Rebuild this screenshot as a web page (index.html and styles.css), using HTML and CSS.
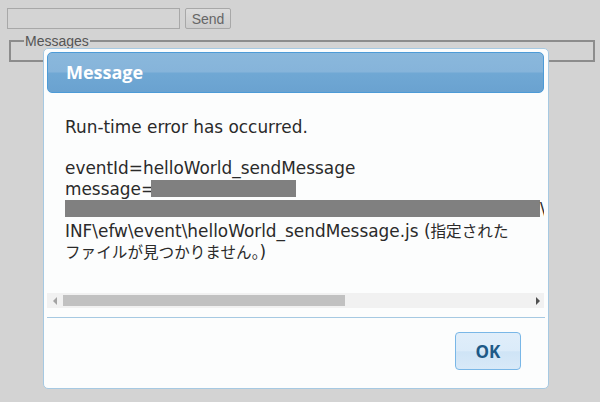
FILE: index.html
```html
<!DOCTYPE html>
<html>
<head>
<meta charset="utf-8">
<link rel="stylesheet" href="styles.css">
</head>
<body>
<div class="page">
  <div class="toolbar">
    <input class="msg-input" type="text">
    <button class="send-btn">Send</button>
  </div>
  <fieldset class="messages">
    <legend>Messages</legend>
  </fieldset>
</div>
<div class="dialog">
  <div class="dialog-header">Message</div>
  <div class="dialog-content">
    <div class="text">
      <div class="line">Run-time error has occurred.</div>
      <div class="line">&nbsp;</div>
      <div class="line">eventId=helloWorld_sendMessage</div>
      <div class="line">message=<span class="redact redact-short"></span></div>
      <div class="line"><span class="redact redact-long"></span>\WEB-</div>
      <div class="line">INF\efw\event\helloWorld_sendMessage.js (<span class="ja">指定された</span></div>
      <div class="line"><span class="ja">ファイルが見つかりません。</span>)</div>
    </div>
  </div>
  <div class="hscroll">
    <span class="arrow arrow-left"></span>
    <div class="track"><div class="thumb"></div></div>
    <span class="arrow arrow-right"></span>
  </div>
  <div class="buttonpane">
    <button class="ok-btn">OK</button>
  </div>
</div>
</body>
</html>
```
FILE: styles.css
```css
html, body {
  margin: 0;
  padding: 0;
  background: #d3d3d3;
  width: 600px;
  height: 402px;
  overflow: hidden;
  font-family: "DejaVu Sans", "Noto Sans CJK JP", sans-serif;
}
.page {
  padding: 8px 6px 0 7px;
}
.toolbar {
  display: flex;
  align-items: flex-start;
  gap: 5px;
  height: 21px;
}
.msg-input {
  box-sizing: border-box;
  width: 173px;
  height: 21px;
  margin: 0;
  border: 1px solid #a8a8a8;
  background: #d4d4d4;
}
.send-btn {
  box-sizing: border-box;
  width: 46px;
  height: 21px;
  margin: 0;
  padding: 0;
  border: 1px solid #a8a8a8;
  border-radius: 2px;
  background: linear-gradient(#dcdcdc, #cdcdcd);
  color: #666;
  font-family: "Liberation Sans", sans-serif;
  font-size: 14px;
}
.messages {
  box-sizing: border-box;
  margin: 7px 0 0 2px;
  width: 586px;
  height: 26px;
  padding: 0;
  border: 2px solid #8c8c8c;
}
.messages legend {
  margin-left: 13px;
  padding: 0 1px;
  font-family: "Liberation Sans", sans-serif;
  font-size: 14px;
  color: #555;
  line-height: 10px;
}
.dialog {
  position: absolute;
  left: 43px;
  top: 48px;
  width: 506px;
  height: 341px;
  box-sizing: border-box;
  border: 1px solid #a6c9e2;
  border-radius: 5px;
  background: #fcfdfd;
  padding: 3px;
  display: flex;
  flex-direction: column;
}
.dialog-header {
  box-sizing: border-box;
  height: 41px;
  margin-right: 1px;
  border: 1px solid #4d9bd7;
  border-radius: 5px;
  background: linear-gradient(#8ab8dc 0%, #86b4da 48%, #70a8d4 52%, #6aa2d0 100%);
  color: #fff;
  font-family: "Open Sans", sans-serif;
  font-weight: bold;
  font-size: 18px;
  line-height: 39px;
  padding-left: 18px;
}
.dialog-content {
  height: 200px;
  overflow: hidden;
  padding-left: 18px;
  margin-right: 1px;
}
.text {
  padding-top: 24px;
  font-size: 16.9px;
  color: #2a2a2a;
}
.line {
  height: 20.6px;
  line-height: 20.6px;
  white-space: nowrap;
}
.ja {
  font-family: "Noto Sans CJK JP", sans-serif;
  font-size: 15.6px;
}
.redact {
  display: inline-block;
  background: #808080;
  vertical-align: top;
}
.redact-short {
  width: 145px;
  height: 17px;
  margin-top: 1px;
  margin-left: -4px;
}
.redact-long {
  width: 475px;
  height: 17px;
  margin-top: 1px;
}
.hscroll {
  height: 15px;
  margin-right: 1px;
  background: #f1f1f1;
  display: flex;
  align-items: center;
}
.arrow {
  width: 0;
  height: 0;
  border-top: 4px solid transparent;
  border-bottom: 4px solid transparent;
}
.arrow-left {
  margin-left: 6px;
  border-right: 4px solid #a3a3a3;
}
.arrow-right {
  margin-right: 4px;
  margin-left: 8px;
  border-left: 4px solid #505050;
}
.track {
  flex: 1;
  height: 11px;
  margin-left: 6px;
}
.thumb {
  width: 282px;
  height: 11px;
  background: #c1c1c1;
}
.buttonpane {
  margin-top: 9px;
  border-top: 1px solid #a6c9e2;
  display: flex;
  justify-content: flex-end;
  padding: 14px 24px 0 0;
}
.ok-btn {
  box-sizing: border-box;
  width: 66px;
  height: 38px;
  margin: 0;
  border: 1px solid #79b7e7;
  border-radius: 4px;
  background: linear-gradient(#e0eefa 0%, #dbebf9 50%, #cfe4f6 52%, #d8e9f8 100%);
  color: #1d5987;
  font-family: "Open Sans", sans-serif;
  font-weight: bold;
  font-size: 17px;
  padding: 0;
}
```
